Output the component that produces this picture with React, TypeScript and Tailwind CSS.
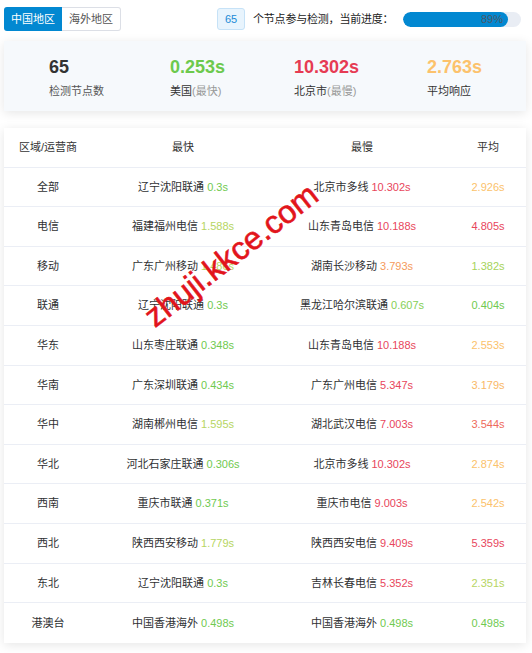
import React from "react";

type Row = {
  region: string;
  fast: string;
  fastV: string;
  fastC: string;
  slow: string;
  slowV: string;
  slowC: string;
  avg: string;
  avgC: string;
};

const G = "#70ca50";
const L = "#b6d562";
const Y = "#fbc26b";
const O = "#f59a5c";
const R = "#e8465c";
const RO = "#ee6a5c";

const rows: Row[] = [
  { region: "全部", fast: "辽宁沈阳联通", fastV: "0.3s", fastC: G, slow: "北京市多线", slowV: "10.302s", slowC: R, avg: "2.926s", avgC: Y },
  { region: "电信", fast: "福建福州电信", fastV: "1.588s", fastC: L, slow: "山东青岛电信", slowV: "10.188s", slowC: R, avg: "4.805s", avgC: R },
  { region: "移动", fast: "广东广州移动", fastV: "1.486s", fastC: L, slow: "湖南长沙移动", slowV: "3.793s", slowC: O, avg: "1.382s", avgC: "#a6d35a" },
  { region: "联通", fast: "辽宁沈阳联通", fastV: "0.3s", fastC: G, slow: "黑龙江哈尔滨联通", slowV: "0.607s", slowC: "#86cf56", avg: "0.404s", avgC: G },
  { region: "华东", fast: "山东枣庄联通", fastV: "0.348s", fastC: G, slow: "山东青岛电信", slowV: "10.188s", slowC: R, avg: "2.553s", avgC: Y },
  { region: "华南", fast: "广东深圳联通", fastV: "0.434s", fastC: G, slow: "广东广州电信", slowV: "5.347s", slowC: R, avg: "3.179s", avgC: "#f9b867" },
  { region: "华中", fast: "湖南郴州电信", fastV: "1.595s", fastC: L, slow: "湖北武汉电信", slowV: "7.003s", slowC: R, avg: "3.544s", avgC: RO },
  { region: "华北", fast: "河北石家庄联通", fastV: "0.306s", fastC: G, slow: "北京市多线", slowV: "10.302s", slowC: R, avg: "2.874s", avgC: Y },
  { region: "西南", fast: "重庆市联通", fastV: "0.371s", fastC: G, slow: "重庆市电信", slowV: "9.003s", slowC: R, avg: "2.542s", avgC: Y },
  { region: "西北", fast: "陕西西安移动", fastV: "1.779s", fastC: L, slow: "陕西西安电信", slowV: "9.409s", slowC: R, avg: "5.359s", avgC: R },
  { region: "东北", fast: "辽宁沈阳联通", fastV: "0.3s", fastC: G, slow: "吉林长春电信", slowV: "5.352s", slowC: R, avg: "2.351s", avgC: L },
  { region: "港澳台", fast: "中国香港海外", fastV: "0.498s", fastC: G, slow: "中国香港海外", slowV: "0.498s", slowC: G, avg: "0.498s", avgC: G },
];

export default function App() {
  return (
    <div
      className="relative w-[532px] h-[653px] bg-white overflow-hidden text-[11px] text-[#303133]"
      style={{ fontFamily: '"Liberation Sans", "Noto Sans CJK SC", sans-serif' }}
    >
      {/* top bar */}
      <div className="flex items-center pt-[7px] pl-[4px] h-[31px]">
        <div className="flex h-[24px]">
          <div className="w-[58px] h-[24px] flex items-center justify-center bg-[#0288d1] text-white rounded-l-[3px] text-[11px]">
            中国地区
          </div>
          <div className="w-[59px] h-[24px] flex items-center justify-center border border-l-0 border-[#dcdfe6] rounded-r-[3px] text-[#555] text-[11px]">
            海外地区
          </div>
        </div>
        <div className="ml-[96px] w-[28px] h-[22px] flex items-center justify-center bg-[#e8f4fd] border border-[#c6e2f7] rounded-[3px] text-[#1a8ad6] text-[11px]">
          65
        </div>
        <div className="ml-[8px] text-[#222] text-[11px] tracking-[-0.2px]">个节点参与检测，当前进度：</div>
        <div className="ml-auto mr-[11px] w-[118px] h-[15px] rounded-full bg-[#e9edf4] overflow-hidden">
          <div className="h-full w-[89%] bg-[#0288d1] rounded-full flex items-center justify-end pr-[5px] text-[11px] text-[#4d5866]">
            89%
          </div>
        </div>
      </div>

      {/* summary card */}
      <div className="mt-[10px] ml-[4px] w-[522px] h-[70px] bg-[#f6f9fc] shadow-[0_2px_10px_rgba(0,0,0,0.10)] flex pt-[17px] pl-[45px]">
        <div className="w-[121px] flex flex-col">
          <div className="text-[18px] leading-[18px] font-bold text-[#333]">65</div>
          <div className="mt-[7px] leading-[16px] text-[#555]">检测节点数</div>
        </div>
        <div className="w-[124px] flex flex-col">
          <div className="text-[18px] leading-[18px] font-bold text-[#6cc94d]">0.253s</div>
          <div className="mt-[7px] leading-[16px] text-[#333]">
            美国<span className="text-[#999]">(最快)</span>
          </div>
        </div>
        <div className="w-[133px] flex flex-col">
          <div className="text-[18px] leading-[18px] font-bold text-[#e63b53]">10.302s</div>
          <div className="mt-[7px] leading-[16px] text-[#333]">
            北京市<span className="text-[#999]">(最慢)</span>
          </div>
        </div>
        <div className="flex flex-col">
          <div className="text-[18px] leading-[18px] font-bold text-[#fcc26c]">2.763s</div>
          <div className="mt-[7px] leading-[16px] text-[#333]">平均响应</div>
        </div>
      </div>

      {/* table card */}
      <div className="mt-[17px] ml-[4px] w-[522px] bg-white shadow-[0_2px_10px_rgba(0,0,0,0.10)]">
        <div className="grid grid-cols-[88px_182px_176px_1fr] h-[39.6px] border-b border-[#ebeef5] items-center text-center text-[#333]">
          <div>区域/运营商</div>
          <div>最快</div>
          <div>最慢</div>
          <div>平均</div>
        </div>
        {rows.map((r, i) => (
          <div
            key={i}
            className={
              "grid grid-cols-[88px_182px_176px_1fr] h-[39.6px] items-center text-center " +
              (i < rows.length - 1 ? "border-b border-[#ebeef5]" : "")
            }
          >
            <div>{r.region}</div>
            <div>
              {r.fast} <span style={{ color: r.fastC }}>{r.fastV}</span>
            </div>
            <div>
              {r.slow} <span style={{ color: r.slowC }}>{r.slowV}</span>
            </div>
            <div style={{ color: r.avgC }}>{r.avg}</div>
          </div>
        ))}
      </div>

      {/* watermark */}
      <div
        className="absolute left-[231px] top-[255px] -translate-x-1/2 -translate-y-1/2 rotate-[-38deg] whitespace-nowrap text-[32px] leading-none text-[#e2141b] pointer-events-none"
        style={{ fontFamily: '"Liberation Sans", sans-serif', WebkitTextStroke: "0.6px #e2141b" }}
      >
        zhuji.kkce.com
      </div>
    </div>
  );
}
